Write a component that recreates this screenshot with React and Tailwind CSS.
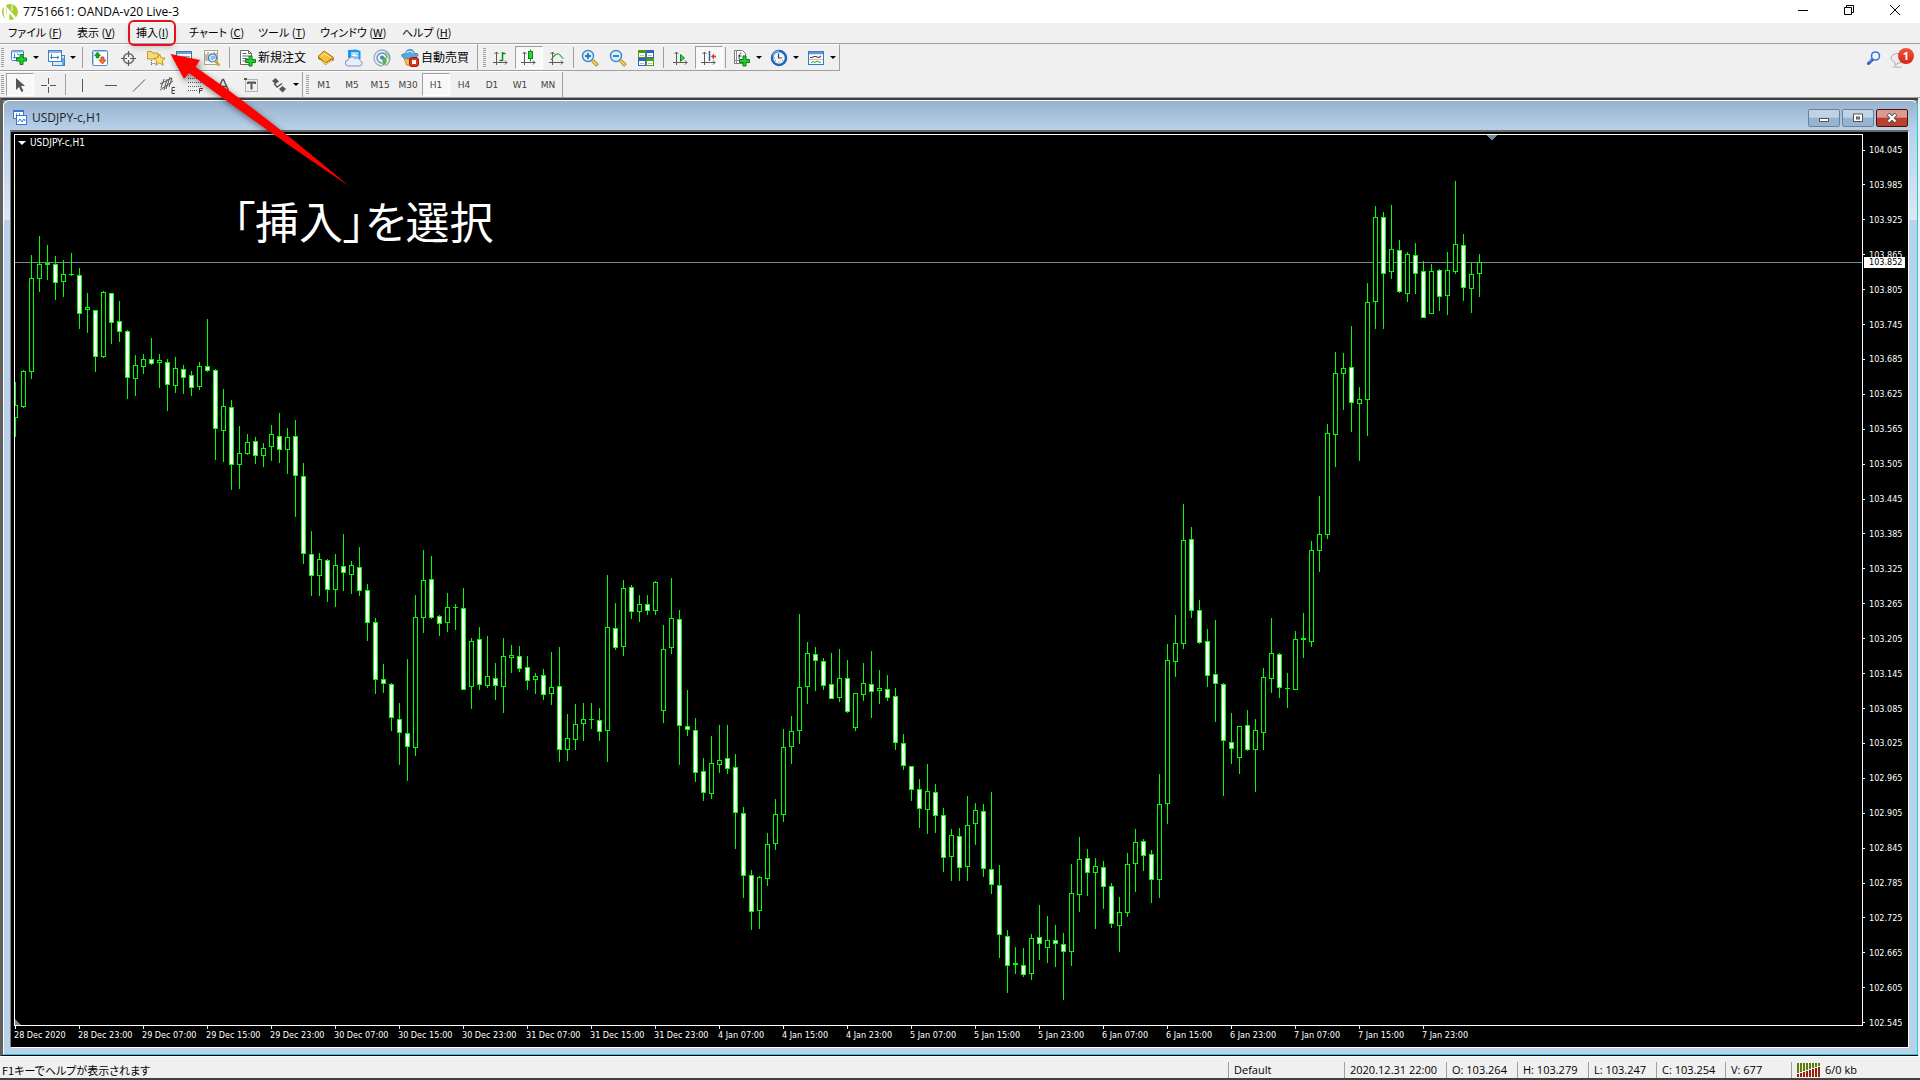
import React from 'react';
import clsx from 'clsx';

const UI_FONT = "font-['Open_Sans','Noto_Sans_CJK_JP',sans-serif]";
const CHART_FONT = "font-['DejaVu_Sans_Condensed','DejaVu_Sans',sans-serif]";

// [high, body top, body bottom, low, kind]  u = up, d = down, x = doji
const CANDLES = [
    [382, 405, 418, 437, 'u'], [370, 371, 407, 408, 'u'], [255, 278, 372, 379, 'u'], [236, 264, 279, 292, 'u'],
    [245, 263, 265, 280, 'x'], [256, 264, 283, 300, 'd'], [260, 274, 282, 297, 'u'], [253, 274, 275, 276, 'x'],
    [268, 275, 314, 329, 'd'], [293, 307, 310, 333, 'u'], [310, 310, 357, 372, 'd'], [291, 292, 357, 358, 'u'],
    [293, 293, 323, 344, 'd'], [301, 321, 332, 342, 'd'], [330, 331, 378, 399, 'd'], [355, 365, 379, 396, 'u'],
    [354, 359, 367, 374, 'u'], [338, 359, 364, 365, 'd'], [354, 360, 363, 388, 'u'], [359, 362, 385, 411, 'd'],
    [357, 368, 386, 393, 'u'], [365, 369, 378, 394, 'd'], [371, 375, 388, 396, 'd'], [362, 366, 387, 390, 'u'],
    [319, 366, 371, 372, 'd'], [369, 370, 429, 460, 'd'], [389, 406, 431, 462, 'u'], [400, 407, 465, 490, 'd'],
    [426, 453, 465, 489, 'u'], [434, 442, 454, 455, 'u'], [437, 441, 456, 464, 'd'], [443, 448, 456, 467, 'u'],
    [425, 434, 447, 461, 'u'], [413, 436, 450, 463, 'd'], [428, 437, 450, 474, 'u'], [420, 436, 476, 517, 'd'],
    [463, 476, 554, 564, 'd'], [531, 554, 576, 596, 'd'], [553, 559, 576, 596, 'u'], [559, 560, 590, 602, 'd'],
    [554, 565, 590, 607, 'u'], [534, 566, 573, 591, 'd'], [561, 565, 575, 594, 'u'], [547, 567, 591, 596, 'd'],
    [584, 590, 623, 641, 'd'], [618, 622, 680, 694, 'd'], [664, 679, 684, 693, 'd'], [683, 684, 718, 731, 'd'],
    [703, 719, 733, 765, 'd'], [659, 733, 747, 781, 'd'], [595, 617, 748, 756, 'u'], [550, 580, 618, 633, 'u'],
    [556, 579, 618, 619, 'd'], [615, 616, 624, 636, 'd'], [593, 607, 623, 632, 'u'], [604, 607, 608, 630, 'x'],
    [588, 608, 690, 690, 'd'], [638, 641, 687, 709, 'u'], [627, 639, 685, 690, 'd'], [636, 676, 686, 688, 'u'],
    [663, 678, 686, 700, 'd'], [638, 656, 687, 713, 'u'], [645, 655, 658, 673, 'u'], [646, 656, 669, 672, 'd'],
    [656, 667, 681, 690, 'd'], [673, 676, 680, 694, 'u'], [669, 675, 695, 700, 'd'], [652, 687, 694, 705, 'u'],
    [647, 686, 750, 762, 'd'], [714, 738, 750, 761, 'u'], [704, 724, 740, 750, 'u'], [703, 719, 724, 741, 'u'],
    [703, 719, 720, 729, 'x'], [708, 720, 732, 741, 'd'], [575, 627, 731, 762, 'u'], [603, 628, 648, 650, 'd'],
    [580, 588, 647, 656, 'u'], [585, 587, 612, 619, 'd'], [595, 604, 612, 622, 'u'], [595, 604, 611, 615, 'd'],
    [581, 582, 611, 615, 'u'], [625, 649, 711, 723, 'u'], [578, 618, 648, 654, 'u'], [610, 619, 726, 765, 'd'],
    [690, 726, 730, 736, 'd'], [718, 730, 773, 782, 'd'], [758, 771, 793, 801, 'd'], [736, 763, 794, 799, 'u'],
    [725, 760, 765, 773, 'u'], [725, 758, 769, 774, 'd'], [754, 767, 813, 849, 'd'], [807, 813, 876, 898, 'd'],
    [870, 875, 912, 930, 'd'], [876, 877, 911, 929, 'u'], [833, 844, 879, 886, 'u'], [799, 814, 844, 850, 'u'],
    [729, 747, 815, 822, 'u'], [716, 731, 747, 764, 'u'], [614, 687, 731, 744, 'u'], [642, 653, 687, 704, 'u'],
    [647, 654, 661, 691, 'd'], [658, 661, 686, 690, 'd'], [653, 684, 699, 699, 'd'], [649, 678, 698, 702, 'u'],
    [660, 678, 712, 713, 'd'], [693, 693, 728, 731, 'u'], [663, 683, 695, 701, 'u'], [651, 684, 692, 718, 'd'],
    [670, 688, 691, 704, 'u'], [675, 689, 698, 701, 'd'], [688, 696, 743, 750, 'd'], [734, 743, 766, 770, 'd'],
    [766, 766, 790, 801, 'd'], [779, 789, 809, 828, 'd'], [764, 791, 810, 834, 'u'], [784, 792, 816, 833, 'd'],
    [808, 815, 858, 872, 'd'], [829, 835, 857, 881, 'u'], [828, 836, 868, 881, 'd'], [796, 825, 867, 881, 'u'],
    [803, 810, 824, 845, 'u'], [804, 811, 869, 877, 'd'], [792, 869, 885, 894, 'd'], [865, 885, 935, 958, 'd'],
    [930, 936, 966, 993, 'd'], [947, 963, 965, 974, 'x'], [948, 965, 975, 977, 'd'], [934, 938, 974, 980, 'u'],
    [905, 937, 944, 960, 'd'], [916, 940, 948, 963, 'u'], [925, 940, 944, 967, 'd'], [933, 944, 952, 1000, 'd'],
    [864, 893, 952, 966, 'u'], [837, 859, 895, 912, 'u'], [849, 858, 873, 896, 'd'], [858, 866, 873, 929, 'u'],
    [861, 867, 887, 909, 'd'], [883, 886, 924, 928, 'd'], [897, 912, 926, 952, 'u'], [853, 864, 913, 917, 'u'],
    [829, 842, 864, 892, 'u'], [839, 841, 856, 871, 'd'], [850, 854, 880, 903, 'd'], [774, 804, 880, 898, 'u'],
    [644, 660, 804, 824, 'u'], [615, 643, 662, 677, 'u'], [504, 540, 644, 649, 'u'], [527, 539, 611, 618, 'd'],
    [600, 610, 643, 644, 'd'], [629, 641, 676, 687, 'd'], [620, 674, 684, 722, 'd'], [683, 684, 741, 796, 'd'],
    [713, 742, 749, 764, 'd'], [726, 726, 758, 774, 'u'], [710, 725, 750, 751, 'd'], [719, 730, 750, 792, 'u'],
    [668, 677, 733, 750, 'u'], [618, 653, 679, 693, 'u'], [653, 654, 688, 698, 'd'], [673, 688, 689, 708, 'x'],
    [631, 639, 690, 690, 'u'], [613, 638, 640, 658, 'x'], [541, 550, 642, 647, 'u'], [496, 534, 551, 572, 'u'],
    [424, 433, 535, 539, 'u'], [352, 373, 435, 467, 'u'], [353, 368, 374, 410, 'u'], [326, 367, 403, 432, 'd'],
    [387, 399, 404, 461, 'u'], [283, 302, 400, 436, 'u'], [206, 217, 302, 329, 'u'], [212, 217, 274, 329, 'd'],
    [205, 249, 272, 279, 'u'], [240, 250, 292, 293, 'd'], [252, 254, 294, 302, 'u'], [243, 255, 274, 294, 'd'],
    [261, 271, 318, 318, 'd'], [264, 271, 314, 314, 'u'], [269, 270, 297, 311, 'd'], [252, 270, 296, 315, 'u'],
    [181, 244, 272, 274, 'u'], [234, 245, 288, 301, 'd'], [263, 274, 289, 313, 'u'], [254, 262, 274, 297, 'u'],
];

const PLOT_TOP = 135;
const PRICES = Array.from({ length: 26 }, (_, i) => (104.045 - i * 0.06).toFixed(3));
const TIMES = [
    '28 Dec 2020', '28 Dec 23:00', '29 Dec 07:00', '29 Dec 15:00', '29 Dec 23:00', '30 Dec 07:00', '30 Dec 15:00', '30 Dec 23:00',
    '31 Dec 07:00', '31 Dec 15:00', '31 Dec 23:00', '4 Jan 07:00', '4 Jan 15:00', '4 Jan 23:00', '5 Jan 07:00', '5 Jan 15:00',
    '5 Jan 23:00', '6 Jan 07:00', '6 Jan 15:00', '6 Jan 23:00', '7 Jan 07:00', '7 Jan 15:00', '7 Jan 23:00',
];

const MENU = [
    { label: 'ファイル ', key: 'F', width: 'w-[69px]' },
    { label: '表示 ', key: 'V', width: 'w-[59px]' },
    { label: '挿入', key: 'I', width: 'w-[53px]', marked: true },
    { label: 'チャート ', key: 'C', width: 'w-[69px]' },
    { label: 'ツール ', key: 'T', width: 'w-[62px]' },
    { label: 'ウィンドウ ', key: 'W', width: 'w-[82px]' },
    { label: 'ヘルプ ', key: 'H', width: 'w-[68px]' },
];

/* ---------- icons ---------- */
const Icon = ({ children }) => (
    <svg width="20" height="20" viewBox="0 0 20 20" fill="none" className="shrink-0">{children}</svg>
);
const Plus = ({ x = 0, y = 0 }) => (
    <path transform={`translate(${x} ${y})`} d="M4 .5h3V4h3.5v3H7v3.5H4V7H.5V4H4z" fill="#1fd12c" stroke="#0a7d14" />
);
const Axes = () => (
    <path d="M5.500 4v13M2 14.500h14M3.500 6l2-2 2 2M14 12.500l2 2-2 2" stroke="#5a5a5a" />
);

const NewChartIcon = () => (
    <Icon>
        <rect x="2.500" y="2.500" width="12" height="10" rx="1" fill="#fff" stroke="#3f83c4" />
        <path d="M3 3.500h11" stroke="#7fb4e6" strokeWidth="2" />
        <path d="M5.500 5.500v5M4 9.500h6M8 6l2 1" stroke="#3f83c4" />
        <Plus x={7} y={6} />
    </Icon>
);
const ProfilesIcon = () => (
    <Icon>
        <rect x="6.500" y="7.500" width="12" height="10" fill="#d6e9fa" stroke="#3f83c4" />
        <path d="M17 17V10" stroke="#6ea4d8" strokeWidth="2" />
        <rect x="2.500" y="2.500" width="13" height="11" fill="#fff" stroke="#3f83c4" />
        <path d="M3 4h12" stroke="#85b8e8" strokeWidth="2" />
        <path d="M5.500 6v5M4 9.500h9M11 8l2 1.500-2 1.500" stroke="#3f83c4" />
    </Icon>
);
const MarketWatchIcon = () => (
    <Icon>
        <rect x="2.500" y="2.500" width="15" height="15" rx="1" fill="#fff" stroke="#4d8fd0" />
        <path d="M3.500 17V3.500H17" stroke="#a9cdef" />
        <path d="M7.500 4l3 3.500H9V10H6V7.500H4.500z" fill="#14a51f" stroke="#0b7813" strokeWidth=".6" />
        <path d="M11 9h3v3h2l-3.500 4L9 12h2z" fill="#f2703a" stroke="#b8300c" strokeWidth=".7" />
    </Icon>
);
const DataWindowIcon = () => (
    <Icon>
        <circle cx="10.500" cy="10.500" r="5" stroke="#6a6a6a" strokeWidth="1.500" />
        <path d="M10.500 3v6M10.500 12v6M3 10.500h6M12 10.500h6" stroke="#5a5a5a" strokeWidth="1.200" />
    </Icon>
);
const NavigatorIcon = () => (
    <Icon>
        <path d="M1.500 3.500h4l1 1.500h5.500v6H1.500z" fill="#f9dc74" stroke="#c79a2a" />
        <path d="M5.500 12v6M5.500 15.500h5" stroke="#666" strokeDasharray="1 1" />
        <path d="M13.500 6l1.700 3.800 4 .4-3 2.800 1 4.200-3.700-2.200L9.800 17.200l1-4.200-3-2.800 4-.4z" fill="#ffe066" stroke="#b8891b" strokeWidth=".9" />
    </Icon>
);
const TerminalIcon = () => (
    <Icon>
        <rect x="2.500" y="3.500" width="15" height="13" fill="#fff" stroke="#3f77ae" />
        <path d="M3 5h14" stroke="#6ea4d8" strokeWidth="2" />
        <path d="M4 8.500h2M4 10.500h2" stroke="#d44" />
        <path d="M8 8.500h8M8 10.500h8M8 12.500h8" stroke="#9aa" />
    </Icon>
);
const TesterIcon = () => (
    <Icon>
        <rect x="2.500" y="2.500" width="13" height="14" fill="#fbfbf4" stroke="#a8a68c" />
        <path d="M4 6v7M6 4v9M9 5v4M12 4v5M14 5v6" stroke="#777" />
        <circle cx="10.500" cy="10" r="4" fill="#cfe7fb" fillOpacity=".85" stroke="#3b7fc2" strokeWidth="1.200" />
        <path d="M10 8v4M12 8v3" stroke="#5a88b4" />
        <path d="M13.500 13.500l4 4" stroke="#d8a12a" strokeWidth="2.500" />
    </Icon>
);
const NewOrderIcon = () => (
    <Icon>
        <path d="M3.500 2.500h8l3 3v11h-11z" fill="#fff" stroke="#6b6b6b" />
        <path d="M11.500 2.500v3h3" stroke="#6b6b6b" />
        <path d="M5.500 5.500h4M5.500 8h7M5.500 10.500h5M5.500 13h3" stroke="#666" />
        <Plus x={8} y={7.5} />
    </Icon>
);
const GoldIcon = () => (
    <Icon>
        <path d="M2 10.500L9.500 17l8.500-5v-2L9.500 15 2 8.500z" fill="#b5750a" />
        <path d="M2 8.500L8 3l9.500 6.500-8 5.500z" fill="#f5c23a" stroke="#a86e0c" />
        <path d="M5 8.500L8.500 5.500l5 3.500" stroke="#ffe9a0" />
        <path d="M4 12l6 4 6-3.500" stroke="#fbe6a4" />
    </Icon>
);
const CloudIcon = () => (
    <Icon>
        <path d="M4 2l8-.5 4.500 1.500v8H6l-2-1.500z" fill="#1e95ee" />
        <path d="M7 4h7.500v6H7z" fill="#9fd6fb" />
        <path d="M8 7.500h5M9 5l3 3" stroke="#fff" />
        <path d="M4.500 18a3 3 0 01-.3-6 4 4 0 017-1.500 3.300 3.300 0 015 2A2.900 2.900 0 0116 18z" fill="#e6eefb" stroke="#7c93bd" />
    </Icon>
);
const SignalIcon = () => (
    <Icon>
        <path d="M10 18a8 8 0 118-8c0 4-3 7-5 7.500" stroke="#93a9c4" strokeWidth="1.300" />
        <path d="M10 15a5 5 0 115-5" stroke="#5f8dbd" strokeWidth="1.300" />
        <path d="M10.500 18V11l2-2c3 1 3.500 7-2 9z" fill="#52b947" />
        <path d="M13 4a7 7 0 014 8" stroke="#6cc35f" strokeWidth="1.300" />
        <circle cx="10" cy="9.500" r="2" fill="#3a83d0" />
    </Icon>
);
const AutoTradeIcon = () => (
    <Icon>
        <path d="M3.500 9l3 8 6 1 3-8z" fill="#f3c23e" stroke="#b88213" strokeWidth=".8" />
        <path d="M1.500 7.500c0-1.500 3-2 4-1.500 0-3 2-4.500 4.500-4.500S14 3 14.500 5.500c2 0 4 0 3.500 1.500-1 3-6 4-9 4s-7-1.500-7.500-3.500z" fill="#5aa9dd" stroke="#2d7cb3" strokeWidth=".8" />
        <path d="M6.500 5c1-2 5-2.500 7 0" stroke="#bfe3f7" strokeWidth="1.300" />
        <rect x="9.500" y="9.500" width="9" height="9" rx="2.500" fill="#e13222" stroke="#a8170b" />
        <rect x="12" y="12" width="4" height="4" fill="#fff" />
    </Icon>
);
const BarChartIcon = () => <Icon><Axes /><path d="M8.500 12.500h3M11.500 4v9M11.500 5.500h3" stroke="#0a8a14" strokeWidth="1.500" /></Icon>;
const CandleIcon = () => (
    <Icon>
        <Axes />
        <path d="M11.500 1.500v12" stroke="#0a8a14" />
        <rect x="9.500" y="3.500" width="4" height="7" fill="#2fd53e" stroke="#0a8a14" />
    </Icon>
);
const LineChartIcon = () => <Icon><Axes /><path d="M4 12c2-3 5-7 7.500-6 2 .5 3 4 5 4.500" stroke="#2aa035" strokeWidth="1.200" /></Icon>;
const ZoomIcon = ({ plus }) => (
    <Icon>
        <path d="M12.500 12.500l5 5" stroke="#a77b12" strokeWidth="3.500" />
        <path d="M12.500 12.500l4.500 4.500" stroke="#f4d24c" strokeWidth="2" />
        <circle cx="8" cy="8" r="5.500" fill="#d9effc" stroke="#3f87c9" strokeWidth="1.400" />
        <path d={plus ? 'M5 8h6M8 5v6' : 'M5 8h6'} stroke="#3474b4" strokeWidth="1.800" />
    </Icon>
);
const TileIcon = () => (
    <Icon>
        <path d="M2 2h8v8H2zM10 10h8v8h-8z" fill="#4b9a1c" />
        <path d="M10 2h8v8h-8zM2 10h8v8H2z" fill="#2d62c4" />
        <path d="M3 5h6v4H3zM11 5h6v4h-6zM3 13h6v4H3zM11 13h6v4h-6z" fill="#fff" />
        <path d="M4 7.500h4M12 7.500h4M4 15.500h4M12 15.500h4" stroke="#a9c3b0" />
    </Icon>
);
const AutoScrollIcon = () => <Icon><Axes /><path d="M9.500 6.500l4 3.500-4 3.500z" fill="#2fd53e" stroke="#0a8a14" /></Icon>;
const ShiftIcon = () => (
    <Icon>
        <Axes />
        <path d="M10.500 3v10" stroke="#2d62a8" strokeWidth="1.500" />
        <path d="M12 8.500l3-3v2h2v2h-2v2z" fill="#d6481c" />
    </Icon>
);
const IndicatorsIcon = () => (
    <Icon>
        <path d="M2.500 2.500h8l3 3v10h-11z" fill="#fff" stroke="#7a7a7a" />
        <path d="M4.500 3v12M3 12.500h9" stroke="#8a8a8a" />
        <path d="M9.500 5C8 5 7.500 6 7 11M6 8h3.500" stroke="#444" />
        <Plus x={7} y={7.5} />
    </Icon>
);
const ClockIcon = () => (
    <Icon>
        <circle cx="10" cy="10" r="7" fill="#f1f6fb" stroke="#1e66bb" strokeWidth="2.500" />
        <path d="M4 7.500A6.500 6.500 0 0110 3.200" stroke="#6fb1ee" strokeWidth="1.500" />
        <path d="M9.500 5.500V10H13" stroke="#444" strokeWidth="1.200" />
        <path d="M5 10h1M10 14.500v-1M14 13l-1-1M6 13l1-1" stroke="#777" />
    </Icon>
);
const TemplatesIcon = () => (
    <Icon>
        <rect x="2.500" y="3.500" width="15" height="13" fill="#fff" stroke="#3f77b8" />
        <path d="M3 5h14" stroke="#5a97d6" strokeWidth="2.500" />
        <path d="M4 9.500h2l2-1h2l2 1h1l2-1.500" stroke="#8b2a1a" strokeWidth="1.200" />
        <path d="M3 11.500h14" stroke="#a9c7e8" />
        <path d="M5 15l2-1.500 2 1 2-1.500 2 1 2 .5" stroke="#2aa035" />
    </Icon>
);
const PointerIcon = () => <Icon><path d="M6 3v12l3-3 2.500 5 2-1-2.500-5h4z" fill="#555" /></Icon>;
const CrossIcon = () => <Icon><path d="M10.500 3v6M10.500 12v6M3 10.500h6M12 10.500h6" stroke="#555" /></Icon>;
const VLineIcon = () => <Icon><path d="M9.500 4v13" stroke="#555" /></Icon>;
const HLineIcon = () => <Icon><path d="M4 10.500h12" stroke="#555" /></Icon>;
const TrendIcon = () => <Icon><path d="M4 16.500L16 4.500" stroke="#555" /></Icon>;
const ChannelIcon = () => (
    <Icon>
        <path d="M3 9l12-6M3 15l13-9M7 4L4 13M10 4L7 15M13 2L9 14M15 3l-3 9" stroke="#555" />
        <path d="M18 12.500h-3v6h3M15 15.500h3" stroke="#444" />
    </Icon>
);
const FiboIcon = () => (
    <Icon>
        <path d="M3 3.500h14M3 7.500h14M3 11.500h14M3 15.500h9" stroke="#555" strokeDasharray="1 1" />
        <path d="M18 13.500h-3.500v5M15 15.500h2.500" stroke="#444" />
    </Icon>
);
const TextIcon = () => <Icon><path d="M4.500 15.500l5-11h1l5 11M6 11.500h8" stroke="#555" strokeWidth="1.500" /></Icon>;
const LabelIcon = () => (
    <Icon>
        <rect x="4.500" y="4.500" width="12" height="12" stroke="#777" strokeDasharray="1 1" />
        <path d="M3 3h3v2H3z" fill="#555" />
        <path d="M6.500 7.500h8M10.500 7.500v7M7 9V7M14 9V7" stroke="#555" strokeWidth="2" />
    </Icon>
);
const ArrowsIcon = () => (
    <Icon>
        <path d="M3 6l3.500-3L10 6.500 6.500 9z" fill="#555" />
        <path d="M10 14l3.500-3 3.500 3-3.500 3.500z" fill="#555" />
        <path d="M5 8.500L8 12l5-3.500" stroke="#555" strokeWidth="1.500" />
    </Icon>
);
const ChartWindowIcon = () => (
    <svg width="14" height="15" viewBox="0 0 14 15" fill="none">
        <rect x=".5" y=".5" width="10" height="8" fill="#fff" stroke="#3d73d6" />
        <path d="M1 1.500h9" stroke="#3d73d6" />
        <path d="M3.500 3v4M6.500 3v4" stroke="#6f9ae0" />
        <rect x="3.500" y="5.500" width="10" height="9" fill="#fff" stroke="#3d73d6" />
        <path d="M5 12l2-3 2 3 2-3 1 2" stroke="#3d73d6" />
    </svg>
);

/* ---------- toolbar parts ---------- */
const Grip = () => (
    <span className="mx-px h-5 w-[3px] shrink-0 self-center bg-[repeating-linear-gradient(to_bottom,#a0a0a0_0_1px,transparent_1px_2px)]" />
);
const Sep = ({ tight }) => (
    <span className={clsx('h-[21px] w-px shrink-0 self-center bg-[#a0a0a0]', tight ? 'mx-0.5' : 'mx-[3px]')} />
);

const ToolButton = ({ title, icon, pressed, menu, label }) => (
    <button
        type="button"
        aria-label={title}
        aria-pressed={pressed}
        className={clsx(
            'flex h-[23px] shrink-0 items-center justify-center',
            menu ? 'w-[37px]' : label ? 'gap-px pl-1' : 'w-7',
            pressed && 'border border-[#a0a0a0] border-r-white border-b-white bg-[#f8f8f8]'
        )}
    >
        {icon}
        {label && <span className="text-xs leading-4 whitespace-nowrap">{label}</span>}
        {menu && <span className="ml-1 h-0 w-0 border-x-[3px] border-t-[3px] border-x-transparent border-t-black" />}
    </button>
);

const Toolbars = () => (
    <div className="flex justify-between">
        <div className="flex flex-col items-start">
            <div className="flex">
                <div className="flex h-[27px] items-center border-t border-r border-b border-[#a0a0a0] border-t-white">
                    <Grip />
                    <ToolButton title="新規チャート" icon={<NewChartIcon />} menu />
                    <ToolButton title="プロファイル" icon={<ProfilesIcon />} menu />
                    <Sep />
                    <ToolButton title="気配値表示" icon={<MarketWatchIcon />} />
                    <ToolButton title="データウィンドウ" icon={<DataWindowIcon />} />
                    <ToolButton title="ナビゲーター" icon={<NavigatorIcon />} />
                    <ToolButton title="ターミナル" icon={<TerminalIcon />} />
                    <ToolButton title="ストラテジーテスター" icon={<TesterIcon />} />
                    <Sep />
                    <ToolButton title="新規注文" icon={<NewOrderIcon />} label="新規注文" />
                    <span className="w-1.5" />
                    <ToolButton title="MetaEditor" icon={<GoldIcon />} />
                    <ToolButton title="クラウド" icon={<CloudIcon />} />
                    <ToolButton title="シグナル" icon={<SignalIcon />} />
                    <ToolButton title="自動売買" icon={<AutoTradeIcon />} label="自動売買" />
                    <span className="w-2" />
                </div>
                <div className="flex h-[27px] items-center border-t border-r border-b border-[#a0a0a0] border-t-white pl-1">
                    <Grip />
                    <ToolButton title="バーチャート" icon={<BarChartIcon />} />
                    <ToolButton title="ローソク足" icon={<CandleIcon />} pressed />
                    <ToolButton title="ラインチャート" icon={<LineChartIcon />} />
                    <Sep tight />
                    <ToolButton title="拡大" icon={<ZoomIcon plus />} />
                    <ToolButton title="縮小" icon={<ZoomIcon />} />
                    <ToolButton title="整列" icon={<TileIcon />} />
                    <Sep />
                    <ToolButton title="自動スクロール" icon={<AutoScrollIcon />} />
                    <ToolButton title="チャートシフト" icon={<ShiftIcon />} pressed />
                    <Sep tight />
                    <ToolButton title="インディケータ" icon={<IndicatorsIcon />} menu />
                    <ToolButton title="時間足" icon={<ClockIcon />} menu />
                    <ToolButton title="定型チャート" icon={<TemplatesIcon />} menu />
                </div>
            </div>
            <div className="flex h-[26px] border-t border-white">
                <div className="flex items-center border-r border-[#a0a0a0]">
                    <Grip />
                    <span className="w-px" />
                    <ToolButton title="カーソル" icon={<PointerIcon />} pressed />
                    <ToolButton title="十字カーソル" icon={<CrossIcon />} />
                    <Sep />
                    <ToolButton title="垂直線" icon={<VLineIcon />} />
                    <ToolButton title="水平線" icon={<HLineIcon />} />
                    <ToolButton title="トレンドライン" icon={<TrendIcon />} />
                    <ToolButton title="チャネル" icon={<ChannelIcon />} />
                    <ToolButton title="フィボナッチ" icon={<FiboIcon />} />
                    <ToolButton title="テキスト" icon={<TextIcon />} />
                    <ToolButton title="ラベル" icon={<LabelIcon />} />
                    <ToolButton title="矢印" icon={<ArrowsIcon />} menu />
                </div>
                <div className="flex items-center border-r border-[#a0a0a0] pl-0.5 font-['DejaVu_Sans',sans-serif] text-[9px] text-[#444]">
                    <Grip />
                    {['M1', 'M5', 'M15', 'M30', 'H1', 'H4', 'D1', 'W1', 'MN'].map((tf) => (
                        <button
                            key={tf}
                            type="button"
                            className={clsx(
                                'h-[23px] w-7 pt-0.5 text-center',
                                tf === 'H1' && 'border border-[#a0a0a0] border-r-white border-b-white bg-[#f8f8f8]'
                            )}
                        >
                            {tf}
                        </button>
                    ))}
                </div>
            </div>
        </div>
        <div className="flex h-[27px] items-center gap-2 pr-1.5">
            <button type="button" aria-label="検索">
                <svg width="16" height="16" viewBox="0 0 16 16" fill="none">
                    <path d="M7 9l-4.500 4.500" stroke="#2553c8" strokeWidth="3" strokeLinecap="round" />
                    <path d="M6 9.500L3 12.500" stroke="#9cc4f5" strokeWidth="1" />
                    <circle cx="9.500" cy="6" r="4" fill="#eef6ff" stroke="#3a74dc" strokeWidth="1.600" />
                </svg>
            </button>
            <button type="button" aria-label="通知" className="relative h-6 w-6">
                <svg width="24" height="24" viewBox="0 0 24 24" fill="none">
                    <ellipse cx="7" cy="21" rx="5" ry="1" fill="#ccc" />
                    <path d="M5 19.500v-3C2 15 1 13.500 1 12c0-3 3.500-4.500 7-4.500s7 2 7 4.500-2 5-7 5z" fill="#ececef" stroke="#aaa" />
                </svg>
                <span className="absolute top-0.5 right-0 flex h-4 w-4 items-center justify-center rounded-full bg-linear-to-b from-[#f0553a] to-[#d42412] text-[11px] leading-none font-bold text-white">1</span>
            </button>
        </div>
    </div>
);

const TitleBar = () => (
    <header className="flex h-[23px] items-center bg-white pr-0.5 pl-0.5">
        <svg width="16" height="16" viewBox="0 0 16 16" className="mr-[5px]">
            <circle cx="8" cy="8" r="8" fill="#a6ce39" />
            <path d="M3 0v9c0 3 1 5 3 6V6l7 8" fill="none" stroke="#fff" strokeWidth="2.500" />
            <path d="M10 1v6" stroke="#fff" strokeWidth="1" />
        </svg>
        <h1 className="flex-1 text-xs leading-4">7751661: OANDA-v20 Live-3</h1>
        <div className="flex items-center pb-1">
            <button type="button" aria-label="最小化" className="flex w-[46px] justify-center">
                <svg width="12" height="12"><path d="M1 6.500h10" stroke="#000" /></svg>
            </button>
            <button type="button" aria-label="元に戻す" className="flex w-[46px] justify-center">
                <svg width="12" height="12" fill="none"><path d="M1.500 3.500h7v7h-7zM3.500 3V1.500h7v7H9" stroke="#000" /></svg>
            </button>
            <button type="button" aria-label="閉じる" className="flex w-[46px] justify-center">
                <svg width="12" height="12"><path d="M1 1l10 10M11 1L1 11" stroke="#000" /></svg>
            </button>
        </div>
    </header>
);

const MenuBar = () => (
    <nav className="flex h-5 items-center pb-0.5 pl-2 text-[11px] [font-feature-settings:'palt'] font-['Noto_Sans_CJK_JP',sans-serif]">
        {MENU.map((item) => (
            <div key={item.key} className={clsx('relative', item.width)}>
                <button type="button" className="leading-4 whitespace-pre">
                    {item.label}(<u>{item.key}</u>)
                </button>
                {item.marked && (
                    <span className="absolute -top-1 -left-2 h-[26px] w-12 rounded-md border-2 border-[#e8101c] shadow-md" />
                )}
            </div>
        ))}
    </nav>
);

const Plot = () => (
    <svg className="absolute inset-0 h-full w-full" shapeRendering="crispEdges">
        <rect x="0" y={262 - PLOT_TOP} width="100%" height="1" fill="#778899" />
        <path d="M1471 0h11l-5 5h-1z" fill="#778899" />
        {CANDLES.map(([high, top, bottom, low, kind], i) => {
            const x = i * 8;
            return (
                <g key={i} transform={`translate(${x} ${-PLOT_TOP})`} fill="#00ff00">
                    <rect x="0" y={high} width="1" height={low - high} />
                    <rect x="-2" y={top} width="5" height={bottom - top} />
                    {kind !== 'x' && (
                        <rect x="-1" y={top + 1} width="3" height={bottom - top - 2} fill={kind === 'u' ? '#000' : '#fff'} />
                    )}
                </g>
            );
        })}
    </svg>
);

const WinButton = ({ title, close, children }) => (
    <button
        type="button"
        aria-label={title}
        className={clsx(
            'flex h-[18px] w-8 items-center justify-center rounded-xs border',
            close
                ? 'border-[#4a1018] bg-linear-to-b from-[#dc9a90] from-45% to-[#b8402c] to-50%'
                : 'border-[#6c809c] bg-linear-to-b from-[#bfd3e8] from-45% to-[#98b3cf] to-50%'
        )}
    >
        {children}
    </button>
);

const ChartWindow = () => (
    <section className="flex min-h-0 flex-1 flex-col rounded-t-md border border-t-white border-r-[#22c8e0] border-b-[#22c8e0] border-l-white bg-[#b9d1ea] bg-[linear-gradient(to_bottom,#b9d1ea_30px,#dbe7f5_119px,#b9d1ea_119px)] pr-2 pb-1.5 pl-1.5">
        <div className="-mr-2 -ml-1.5 flex h-[29px] items-center rounded-t-md bg-linear-to-b from-[#98b3cf] to-[#b9d1ea] pt-1 pr-[9px] pl-[9px]">
            <ChartWindowIcon />
            <h2 className="ml-[5px] flex-1 text-xs leading-4 text-[#222]">USDJPY-c,H1</h2>
            <div className="flex gap-0.5">
                <WinButton title="最小化">
                    <svg width="12" height="10"><rect x="1.500" y="5.500" width="9" height="3" fill="#fff" stroke="#555" /></svg>
                </WinButton>
                <WinButton title="最大化">
                    <svg width="12" height="10"><rect x="1.500" y="1" width="9" height="7.500" fill="#fff" stroke="#555" /><rect x="4.500" y="4" width="3" height="2" fill="#98b3cf" stroke="#555" /></svg>
                </WinButton>
                <WinButton title="閉じる" close>
                    <svg width="12" height="10"><path d="M2 1l8 8M10 1L2 9" stroke="#555" strokeWidth="4" /><path d="M2.500 1.500l7 7M9.500 1.500l-7 7" stroke="#fff" strokeWidth="2.200" /></svg>
                </WinButton>
            </div>
        </div>
        <div className={clsx('flex min-h-0 flex-1 flex-col border border-t-2 border-t-[#696969] border-r-white border-b-white border-l-[#808080] bg-black pt-0.5 pl-[3px] text-[9px] text-white', CHART_FONT)}>
            <div className="flex min-h-0 flex-1">
                <div className="relative flex-1 border border-white">
                    <Plot />
                    <h3 className="relative flex items-center gap-1 pt-0.5 pl-[3px] text-[10px] leading-3 font-normal">
                        <span className="h-0 w-0 border-x-4 border-t-4 border-x-transparent border-t-white" />
                        USDJPY-c,H1
                    </h3>
                    <span className="absolute bottom-0 left-0 h-0 w-0 border-t-[6px] border-r-[6px] border-t-transparent border-r-transparent border-b-0 border-l-[6px] border-l-[#778899]" />
                </div>
                <div className="relative -mb-[3px] w-[45px]">
                    <ol className="flex h-full flex-col justify-between pt-2.5">
                        {PRICES.map((p) => (
                            <li key={p} className="flex items-center gap-1 leading-3">
                                <span className="h-px w-0.5 bg-white" />
                                {p}
                            </li>
                        ))}
                    </ol>
                    <span className="absolute top-[123px] left-px w-[41px] bg-white pl-[5px] leading-[11px] text-black">103.852</span>
                </div>
            </div>
            <ol className="flex h-[21px] overflow-hidden">
                {TIMES.map((t) => (
                    <li key={t} className="w-16 shrink-0 leading-3 whitespace-nowrap">
                        <span className="ml-px block h-[3px] w-px bg-white" />
                        {t}
                    </li>
                ))}
            </ol>
        </div>
    </section>
);

const StatusBar = () => (
    <footer className="flex h-[22px] shrink-0 items-center border-t border-white pt-1 text-[11px] leading-4">
        <p className="flex-1 pl-0.5 [font-feature-settings:'palt'] font-['Noto_Sans_CJK_JP',sans-serif]">F1キーでヘルプが表示されます</p>
        <p className="w-[116px] border-l border-[#a0a0a0] pl-[5px]">Default</p>
        <p className="w-[102px] border-l border-[#a0a0a0] pl-[5px]">2020.12.31 22:00</p>
        <p className="w-[71px] border-l border-[#a0a0a0] pl-[5px]">O: 103.264</p>
        <p className="w-[71px] border-l border-[#a0a0a0] pl-[5px]">H: 103.279</p>
        <p className="w-[68px] border-l border-[#a0a0a0] pl-[5px]">L: 103.247</p>
        <p className="w-[69px] border-l border-[#a0a0a0] pl-[5px]">C: 103.254</p>
        <p className="w-[66px] border-l border-[#a0a0a0] pl-[5px]">V: 677</p>
        <p className="flex w-[129px] items-center gap-1 border-l border-[#a0a0a0] pl-[5px]">
            <svg width="24" height="14" shapeRendering="crispEdges">
                {[0, 1, 2, 3, 4, 5, 6, 7].map((i) => (
                    <g key={i}>
                        <rect x={i * 3} y="0" width="2" height={10 - i} fill="#5c7d0c" />
                        <rect x={i * 3} y={11 - i} width="2" height={3 + i} fill="#96200c" />
                    </g>
                ))}
            </svg>
            6/0 kb
        </p>
    </footer>
);

const Annotation = () => (
    <>
        <svg className="pointer-events-none absolute top-11 left-40 drop-shadow-[2px_3px_3px_rgba(0,0,0,0.45)]" width="200" height="150" viewBox="160 44 200 150">
            <path d="M170.500 54L200 60l-4.500 7C250 104 300 145 349 186c-52-34-106-73-160-113l-5 6z" fill="#ff0000" />
        </svg>
        <p className="pointer-events-none absolute top-[190px] left-[233px] text-[44px] leading-[60px] whitespace-nowrap text-white [font-feature-settings:'palt'] font-['Noto_Sans_CJK_JP',sans-serif]">
            「挿入」を選択
        </p>
    </>
);

export default function App() {
    return (
        <div className={clsx('relative flex h-screen flex-col overflow-hidden bg-[#f0f0f0] text-black', UI_FONT)}>
            <TitleBar />
            <MenuBar />
            <div className="border-t border-b border-t-[#a0a0a0] border-b-[#a0a0a0]">
                <Toolbars />
            </div>
            <main className="mr-0.5 flex min-h-0 flex-1 flex-col border-t-2 border-b border-l-[3px] border-t-[#404040] border-b-black border-l-[#606060] bg-[#808080]">
                <ChartWindow />
            </main>
            <StatusBar />
            <div className="h-0.5 shrink-0 bg-[#434040]" />
            <Annotation />
        </div>
    );
}
